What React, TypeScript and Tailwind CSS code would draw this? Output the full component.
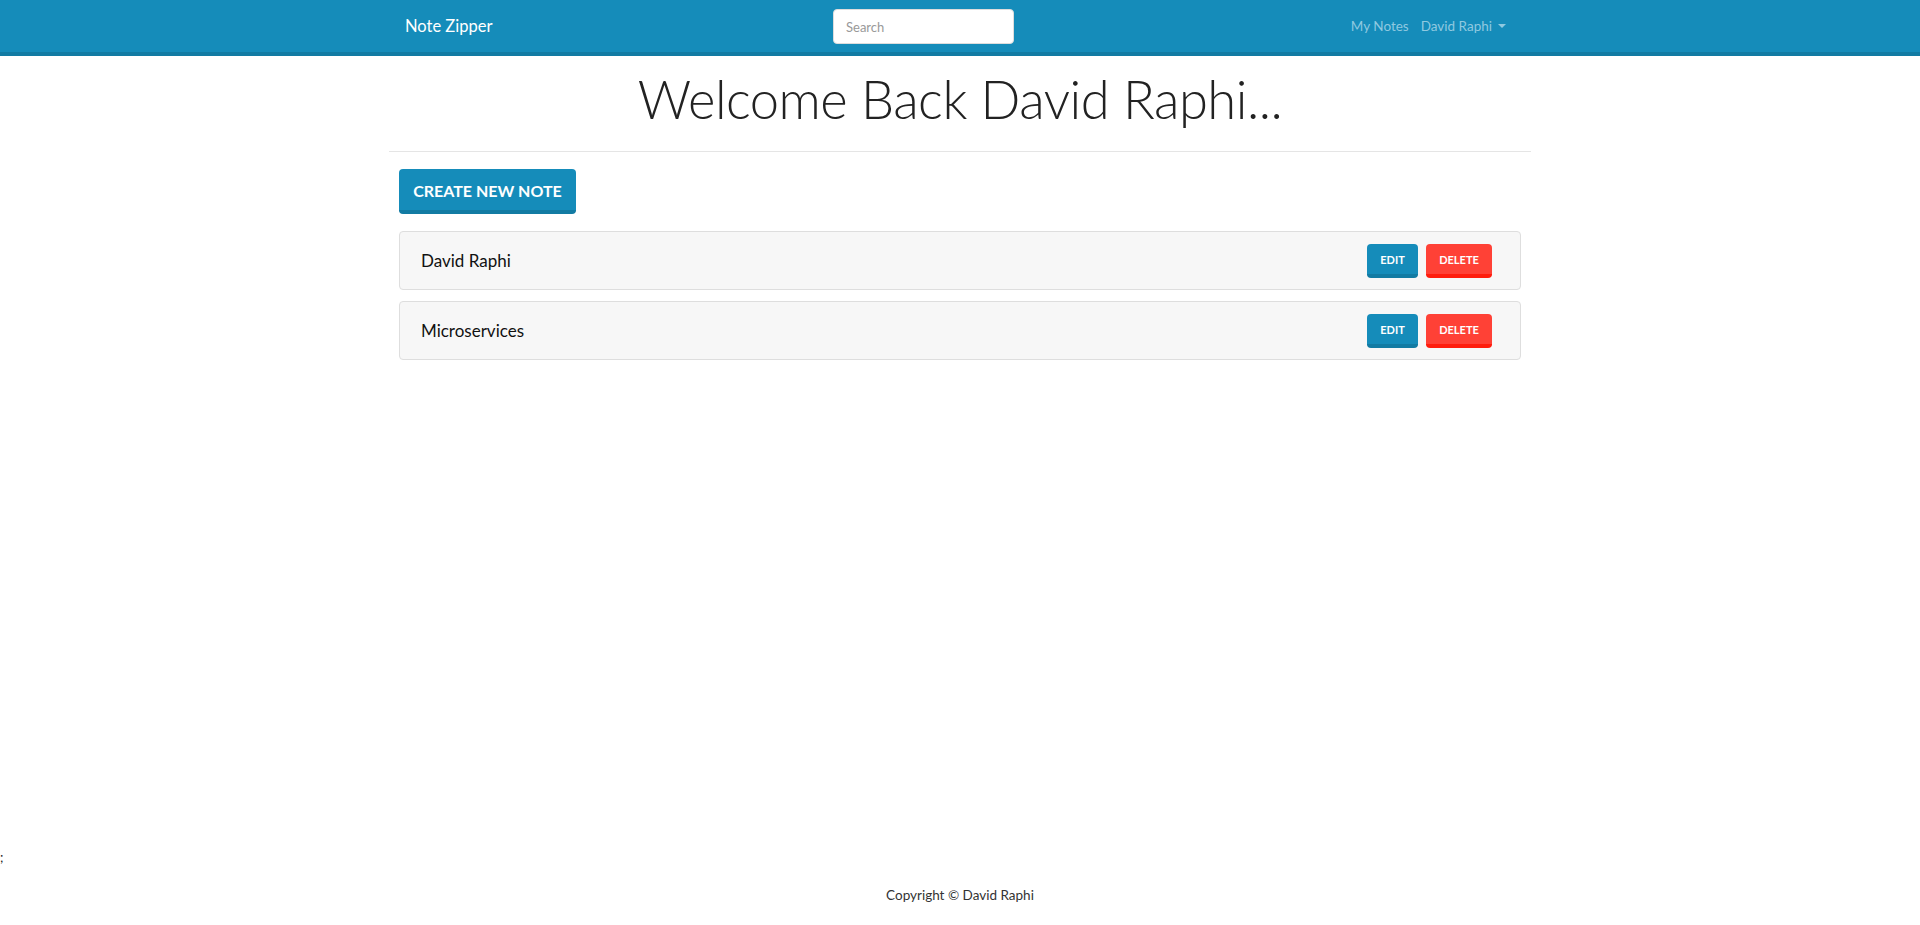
import { useState } from "react"

type Note = { _id: string; title: string }

const notes: Note[] = [
  { _id: "1", title: "David Raphi" },
  { _id: "2", title: "Microservices" },
]

export default function App() {
  const [search, setSearch] = useState("")

  return (
    <div className="min-h-screen flex flex-col bg-white text-[#222] font-['Lato',sans-serif]">
      {/* Header */}
      <header className="bg-[#158cba] border-b-4 border-[#127ba3]">
        <div className="w-[1140px] mx-auto px-[15px] h-[52px] flex items-center">
          <a href="#" className="w-[428px] text-white text-[16.5px] leading-none">
            Note Zipper
          </a>
          <input
            type="text"
            placeholder="Search"
            value={search}
            onChange={(e) => setSearch(e.target.value)}
            className="w-[181px] h-[35px] mt-[1px] rounded-[4px] bg-white border border-[#ddd] px-3 text-[13px] text-[#555] placeholder:text-[#999] outline-none"
          />
          <nav className="ml-auto flex items-center text-[13.5px] text-[#8fc9e0]">
            <a href="#" className="pl-2 pr-[4px]">
              My Notes
            </a>
            <a href="#" className="pl-[8px] pr-[9px] flex items-center">
              David Raphi
              <span className="ml-[6px] w-0 h-0 border-x-[4px] border-x-transparent border-t-[4px] border-t-[#8fc9e0]"></span>
            </a>
          </nav>
        </div>
      </header>

      {/* Main */}
      <main className="flex-1">
        <div className="w-[1142px] mx-auto">
          <div className="h-[96px] flex items-center justify-center border-b border-[#e5e5e5]">
            <h1 className="text-[52.5px] font-light leading-none -mt-[8px] text-[#222] tracking-[-0.5px]">
              Welcome Back David Raphi...
            </h1>
          </div>

          <div className="px-[10px] pt-[17px]">
            <a
              href="#"
              className="inline-flex items-center justify-center w-[177px] h-[45px] rounded-[4px] bg-[#158cba] border-b-4 border-[#127ba3] text-white font-bold text-[16px] uppercase pt-[3px]"
            >
              Create New Note
            </a>

            <div className="mt-[17px] flex flex-col gap-[11px]">
              {notes.map((note) => (
                <div
                  key={note._id}
                  className="h-[59px] flex items-center justify-between bg-[#f7f7f7] border border-[#dedede] rounded-[4px] pl-[21px] pr-[28px]"
                >
                  <span className="text-[17px] text-[#111]">{note.title}</span>
                  <div className="flex items-center gap-2">
                    <button className="w-[51px] h-[34px] rounded-[4px] bg-[#158cba] border-b-4 border-[#127ba3] text-white text-[11px] font-bold uppercase pt-[3px]">
                      Edit
                    </button>
                    <button className="w-[66px] h-[34px] rounded-[4px] bg-[#ff4136] border-b-4 border-[#ff1d0d] text-white text-[11px] font-bold uppercase pt-[3px]">
                      Delete
                    </button>
                  </div>
                </div>
              ))}
            </div>
          </div>
        </div>
      </main>

      <div className="text-[13px] leading-[20px] text-[#222] mb-[18px]">;</div>

      {/* Footer */}
      <footer className="h-[40px] flex items-start justify-center">
        <p className="text-[13.5px] text-[#333]">Copyright © David Raphi</p>
      </footer>
    </div>
  )
}
